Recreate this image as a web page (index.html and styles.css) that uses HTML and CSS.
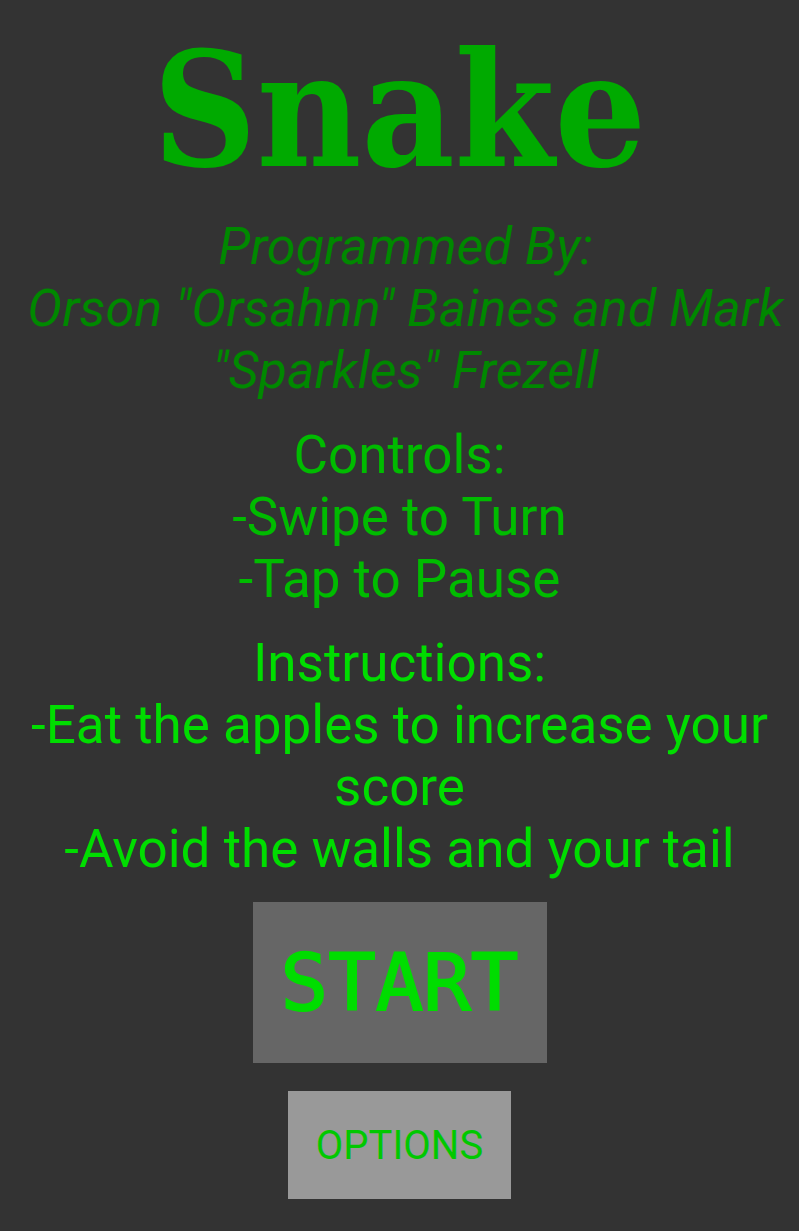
FILE: index.html
```html
<!DOCTYPE html>
<html lang="en">
<head>
<meta charset="utf-8">
<title>Snake</title>
<link rel="stylesheet" href="styles.css">
</head>
<body>
<main class="screen">
  <h1 class="title">Snake</h1>
  <p class="credits">Programmed By:<br>Orson "Orsahnn" Baines and Mark "Sparkles" Frezell</p>
  <p class="controls">Controls:<br>-Swipe to Turn<br>-Tap to Pause</p>
  <p class="instructions">Instructions:<br>-Eat the apples to increase your score<br>-Avoid the walls and your tail</p>
  <div class="btn-start">START</div>
  <div class="btn-options">OPTIONS</div>
</main>
</body>
</html>
```
FILE: styles.css
```css
html, body {
  margin: 0;
  padding: 0;
  background: #333333;
}
.screen {
  display: flex;
  flex-direction: column;
  align-items: center;
  padding-top: 30px;
  width: 799px;
  min-height: 1231px;
  box-sizing: border-box;
}
.title {
  margin: 0 0 26px 0;
  font-family: "DejaVu Serif Condensed", "DejaVu Serif", serif;
  font-stretch: condensed;
  font-weight: bold;
  font-size: 160px;
  line-height: 160px;
  color: #00aa00;
}
.credits, .controls, .instructions {
  margin: 0 0 22px 0;
  font-family: Roboto, sans-serif;
  font-size: 53px;
  line-height: 62px;
  text-align: center;
  padding: 0 10px;
}
.credits {
  font-style: italic;
  font-size: 52.2px;
  padding: 0 0 0 12px;
  color: #008800;
}
.controls {
  color: #00bb00;
}
.instructions {
  color: #00dd00;
}
.btn-start {
  width: 294px;
  height: 161px;
  background: #666666;
  color: #00dd00;
  font-family: "DejaVu Sans Mono", monospace;
  font-size: 79px;
  -webkit-text-stroke: 2px #00dd00;
  display: flex;
  align-items: center;
  justify-content: center;
}
.btn-options {
  margin-top: 28px;
  width: 223px;
  height: 108px;
  background: #999999;
  color: #00c800;
  font-family: Roboto, sans-serif;
  font-size: 40px;
  display: flex;
  align-items: center;
  justify-content: center;
}
```
